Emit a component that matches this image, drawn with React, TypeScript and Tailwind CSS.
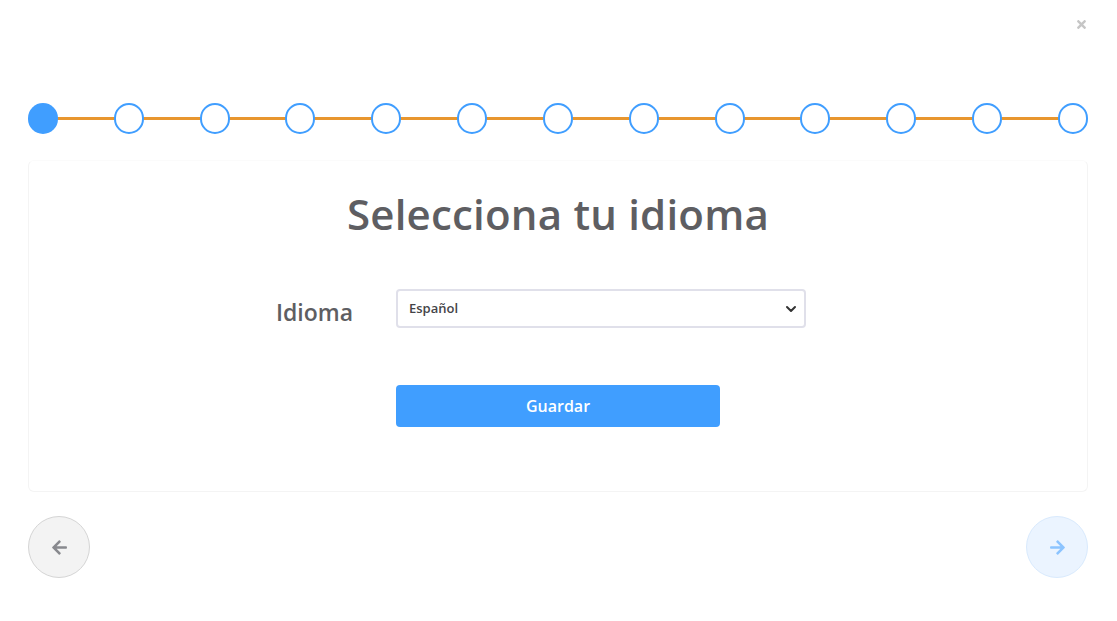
import React from "react";
import { FaArrowLeft, FaArrowRight, FaTimes } from "react-icons/fa";

const font = { fontFamily: '"Open Sans", "Noto Sans", sans-serif' };

export default function App() {
  const steps = Array.from({ length: 13 }, (_, i) => i);
  return (
    <div className="relative w-[1117px] h-[621px] bg-white overflow-hidden" style={font}>
      <button className="absolute left-[1074px] top-[17px] w-[14px] h-[14px] flex items-center justify-center text-[#c6c6c6]">
        <FaTimes size={13} />
      </button>
      <div className="pl-[28px] pr-[29px] pt-[103px]">
        {/* stepper */}
        <div className="relative flex justify-between items-center h-[31px]">
          <div className="absolute left-[15px] right-[15px] top-[14px] h-[3px] bg-[#e8962e]" />
          {steps.map((i) => (
            <div
              key={i}
              className={
                i === 0
                  ? "relative w-[30px] h-[31px] rounded-full bg-[#409eff]"
                  : "relative w-[30px] h-[31px] rounded-full bg-white border-2 border-[#409eff]"
              }
            />
          ))}
        </div>

        {/* card */}
        <div className="mt-[26px] h-[332px] rounded-md border border-[#f4f4f4] border-t-[#fbfbfb]">
          <h1 className="pt-[28px] text-center text-[42px] leading-[50px] font-semibold text-[#5e5e62] tracking-[0.2px]">
            Selecciona tu idioma
          </h1>
          <div className="mt-[48px] flex items-center pl-[247px]">
            <label className="w-[120px] text-[23px] font-semibold text-[#5e5e62] pt-[8px]">Idioma</label>
            <div className="relative w-[410px] h-[39px] rounded-[4px] border-2 border-[#e0e0ea] bg-white flex items-center pl-[11px]">
              <span className="text-[13px] font-semibold text-[#444448]">Español</span>
              <svg className="absolute right-[7px] top-[13px]" width="12" height="10" viewBox="0 0 12 10">
                <path d="M2 3 L6 7 L10 3" fill="none" stroke="#333" strokeWidth="2" strokeLinecap="round" strokeLinejoin="round" />
              </svg>
            </div>
          </div>
          <div className="mt-[55px] pl-[367px]">
            <button className="w-[324px] h-[42px] rounded-[4px] bg-[#409eff] text-white text-[16px] font-semibold">
              Guardar
            </button>
          </div>
        </div>

        {/* nav */}
        <div className="mt-[24px] flex justify-between">
          <button className="w-[62px] h-[62px] rounded-full bg-[#f3f3f3] border border-[#d5d5d5] flex items-center justify-center text-[#88898e]">
            <FaArrowLeft size={17} />
          </button>
          <button className="w-[62px] h-[62px] rounded-full bg-[#ebf4ff] border border-[#d9eafd] flex items-center justify-center text-[#8cc4ff]">
            <FaArrowRight size={17} />
          </button>
        </div>
      </div>
    </div>
  );
}
